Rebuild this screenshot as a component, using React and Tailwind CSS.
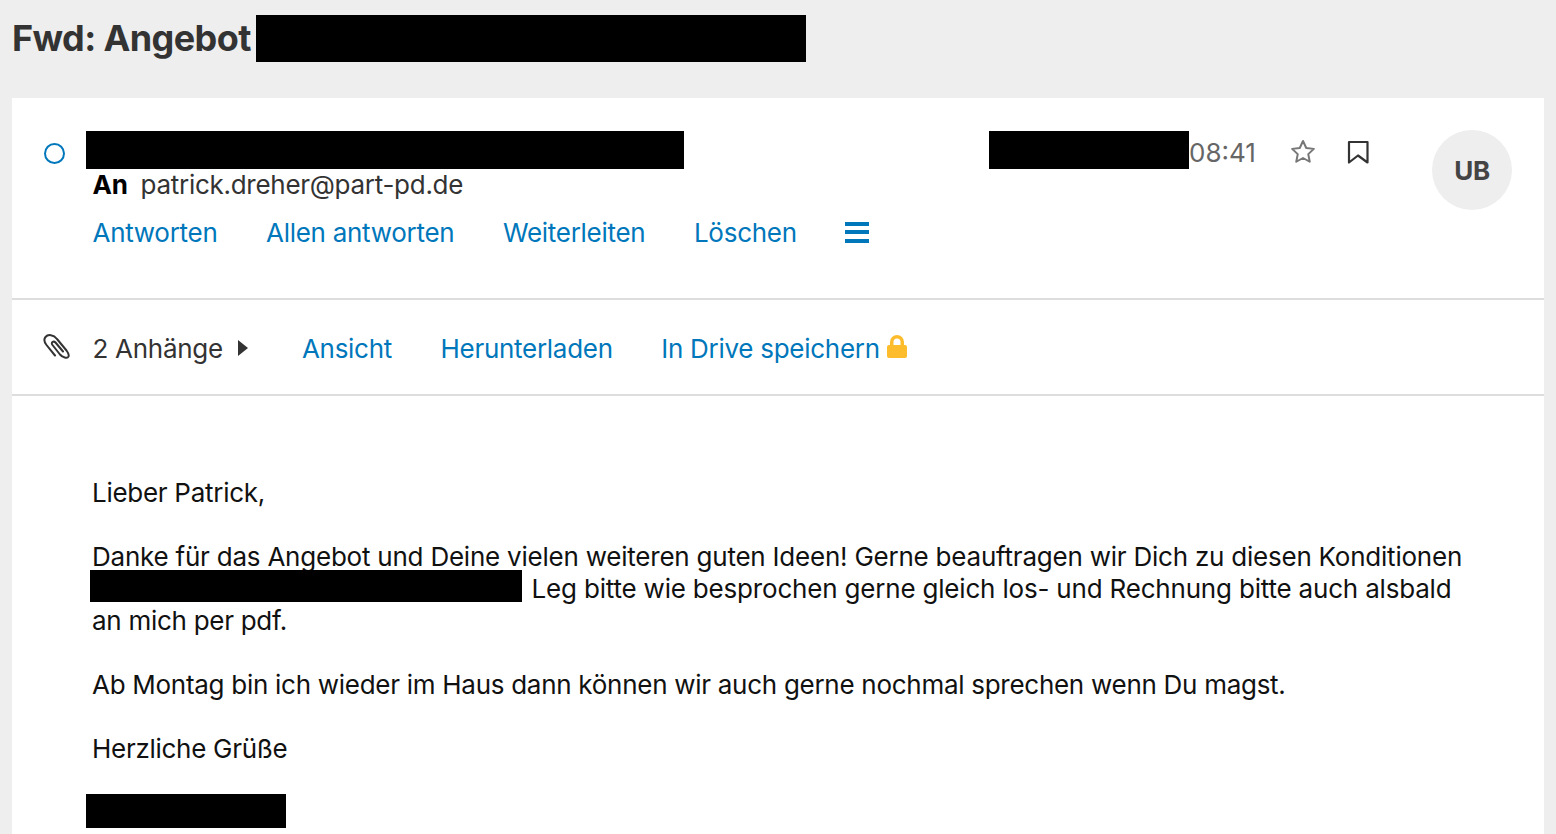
import React from "react";

function Redacted({ className }) {
  return <span className={`block bg-black shrink-0 ${className}`} />;
}

function Paperclip() {
  return (
    <svg width="28" height="28" viewBox="0 0 28 28" fill="none" stroke="#333" strokeWidth="2" strokeLinecap="round" strokeLinejoin="round">
      <path d="M20 18.5L12.500 9.500C10.500 7.500 7.500 9.500 9.500 12L17 21.500C19.500 24.500 24.500 26 25.500 23.500C26.500 21.500 25 19.500 23.500 17.500L14 6C10.500 1.500 5 1 2.500 4C.5 6.500 1.500 9.500 3.500 12L12 22.500" />
    </svg>
  );
}

const actions = ["Antworten", "Allen antworten", "Weiterleiten", "Löschen"];

function App() {
  return (
    <div className="h-[834px] overflow-hidden bg-[#eeeeee] font-['Inter',sans-serif] text-[#333333] tracking-[-0.28px]">
      {/* subject */}
      <div className="flex items-start h-[98px] pl-3 pt-[15px]">
        <h1 className="text-[36px] leading-[47px] font-bold tracking-[-0.6px] mr-[5.500px]">Fwd: Angebot</h1>
        <Redacted className="w-[550px] h-[47px]" />
      </div>

      <div className="mx-3 bg-white h-[736px] overflow-hidden">
        {/* header */}
        <div className="relative h-[202px] border-b-2 border-[#dddddd] pl-[80.500px] pt-[32.500px]">
          <span className="absolute left-[32px] top-[45px] w-[21px] h-[21px] rounded-full border-2 border-[#0077bb]" />
          <div className="flex items-start h-[38px]">
            <Redacted className="w-[598px] h-[38px] -ml-[6.500px]" />
            <Redacted className="w-[200px] h-[38px] ml-[305px]" />
            <span className="text-[26px] leading-[44px] text-[#666666] tracking-normal">08:41</span>
            <svg className="ml-[32px] mt-[6px]" width="30" height="30" viewBox="0 0 24 24" fill="none" stroke="#777777" strokeWidth="1.6" strokeLinejoin="round">
              <path d="M12 3.2l2.6 5.6 6.1.7-4.5 4.2 1.2 6.1L12 16.8l-5.4 3 1.2-6.1-4.5-4.2 6.1-.7z" />
            </svg>
            <svg className="ml-[25px] mt-[7px]" width="30" height="30" viewBox="0 0 30 30" fill="none" stroke="#333333" strokeWidth="2.2" strokeLinejoin="round">
              <path d="M6 4h18.500v20.500L15 17.500 6 24.500z" />
            </svg>
          </div>
          <span className="absolute right-[32px] top-[32px] flex items-center justify-center w-[80px] h-[80px] rounded-full bg-[#eeeeee] text-[26px] font-bold text-[#444444]">UB</span>
          <div className="flex items-center h-[33px] -mt-[1px] text-[26px] leading-[33px]">
            <b className="font-bold text-black mr-[13px]">An</b>
            <span>patrick.dreher@part-pd.de</span>
          </div>
          <div className="flex items-center gap-[48.500px] mt-[15.500px] text-[26px] leading-[33px] text-[#0077bb]">
            {actions.map((a) => (
              <span key={a}>{a}</span>
            ))}
            <span className="flex flex-col gap-[4.500px] w-[24px] -mt-[1px]">
              <i className="block h-[4px] bg-[#0077bb]" />
              <i className="block h-[4px] bg-[#0077bb]" />
              <i className="block h-[4px] bg-[#0077bb]" />
            </span>
          </div>
        </div>

        {/* attachments */}
        <div className="flex items-center h-[96px] border-b-2 border-[#dddddd] pl-[31px] pt-[4px] text-[26px] leading-[34px]">
          <span className="w-[49.500px] -mt-[4px]"><Paperclip /></span>
          <span>2 Anhänge</span>
          <svg className="ml-[15px] -mt-[2px]" width="10" height="16" viewBox="0 0 10 16" fill="#333333"><path d="M0 0l10 8-10 8z" /></svg>
          <div className="flex items-center gap-[48.500px] ml-[54px] text-[#0077bb]">
            <span>Ansicht</span>
            <span>Herunterladen</span>
            <span className="flex items-center">
              In Drive speichern
              <svg className="ml-[7px] -mt-[4px]" width="20" height="24" viewBox="0 0 20 24" fill="#fdbc2c">
                <path d="M3 10V7a7 7 0 0 1 14 0v3h1a2 2 0 0 1 2 2v9a2 2 0 0 1-2 2H2a2 2 0 0 1-2-2v-9a2 2 0 0 1 2-2zm3.500 0h7V7a3.500 3.500 0 0 0-7 0z" />
              </svg>
            </span>
          </div>
        </div>

        {/* body */}
        <div className="pl-[80px] pr-[40px] pt-[81px] text-[26px] leading-[32px] text-[#111111]">
          <p className="mb-[32px]">Lieber Patrick,</p>
          <p className="mb-[32px]">
            <span className="tracking-[-0.225px]">Danke für das Angebot und Deine vielen weiteren guten Ideen! Gerne beauftragen wir Dich zu diesen Konditionen</span>
            <br />
            <span className="inline-block w-[432px] h-[32px] bg-black align-top -ml-[2.500px] relative -top-[3px]" /> <span className="ml-[3px] tracking-[-0.19px]">Leg bitte wie besprochen gerne gleich los- und Rechnung bitte auch alsbald</span>
            <br />
            an mich per pdf.
          </p>
          <p className="mb-[32px]">Ab Montag bin ich wieder im Haus dann können wir auch gerne nochmal sprechen wenn Du magst.</p>
          <p className="mb-[29px]">Herzliche Grüße</p>
          <Redacted className="w-[200px] h-[34px] -ml-[6.500px]" />
        </div>
      </div>
    </div>
  );
}

export default App;
